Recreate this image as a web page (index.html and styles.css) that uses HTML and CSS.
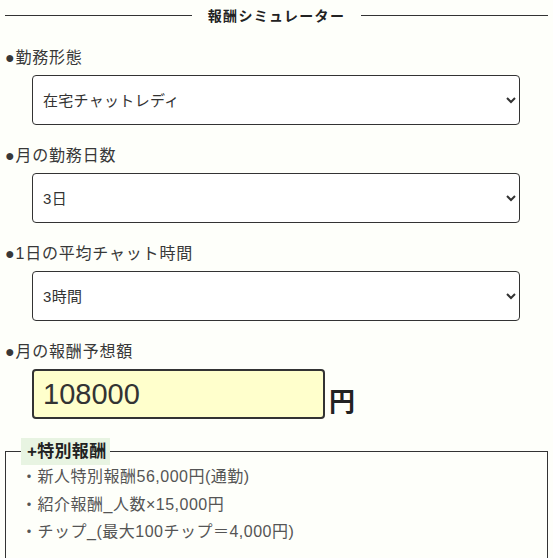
FILE: index.html
```html
<!DOCTYPE html>
<html lang="ja">
<head>
    <meta charset="UTF-8">
    <meta name="viewport" content="width=device-width, initial-scale=1.0">
    <title>報酬シミュレーター</title>
    <link rel="stylesheet" href="styles.css">
</head>
<body>
    <div class="simulator">
        <div class="sim-title">
            <span class="sim-line"></span>
            <h2>報酬シミュレーター</h2>
            <span class="sim-line"></span>
        </div>

        <div class="sim-field">
            <label for="workType">●勤務形態</label>
            <select id="workType">
                <option>在宅チャットレディ</option>
                <option>通勤チャットレディ</option>
            </select>
        </div>

        <div class="sim-field">
            <label for="days">●月の勤務日数</label>
            <select id="days">
                <option>3日</option>
            </select>
        </div>

        <div class="sim-field">
            <label for="hours">●1日の平均チャット時間</label>
            <select id="hours">
                <option>3時間</option>
            </select>
        </div>

        <div class="sim-field">
            <label for="result">●月の報酬予想額</label>
            <div class="result-row">
                <input type="text" id="result" value="108000" readonly>
                <span class="yen">円</span>
            </div>
        </div>

        <fieldset class="bonus">
            <legend>+特別報酬</legend>
            <ul>
                <li>・新人特別報酬56,000円(通勤)</li>
                <li>・紹介報酬_人数×15,000円</li>
                <li>・チップ_(最大100チップ＝4,000円)</li>
            </ul>
        </fieldset>
    </div>
</body>
</html>
```

FILE: styles.css
```css
body {
    margin: 0;
    background-color: #fefffa;
    font-family: "Liberation Sans", "Noto Sans CJK JP", sans-serif;
    color: #333;
}
.simulator {
    padding: 0 5px;
}
.sim-title {
    display: flex;
    align-items: center;
    height: 30px;
    margin-bottom: 16px;
}
.sim-title h2 {
    margin: 0 16px;
    font-size: 14px;
    font-weight: bold;
    letter-spacing: 1.3px;
    color: #222;
}
.sim-line {
    flex: 1;
    height: 1px;
    background: #333;
}
.sim-field {
    margin-bottom: 19px;
}
.sim-field label {
    display: block;
    font-size: 16px;
    line-height: 24px;
    letter-spacing: 0.8px;
    color: #383838;
}
.sim-field select {
    display: block;
    width: 488px;
    height: 50px;
    margin: 5px 0 0 27px;
    padding: 0 6px;
    border: 1px solid #333;
    border-radius: 4px;
    background-color: #fff;
    font-family: "Liberation Sans", "Noto Sans CJK JP", sans-serif;
    font-size: 15px;
    letter-spacing: 0.3px;
    color: #333;
}
.result-row {
    display: flex;
    align-items: flex-end;
    margin: 5px 0 0 27px;
}
.result-row input {
    width: 293px;
    height: 50px;
    box-sizing: border-box;
    padding: 0 9px;
    border: 2px solid #333;
    border-radius: 4px;
    background-color: #ffffcc;
    font-family: "Liberation Sans", "Noto Sans CJK JP", sans-serif;
    font-size: 29px;
    color: #333;
}
.yen {
    margin-left: 4px;
    font-size: 26px;
    font-weight: bold;
    line-height: 34px;
    color: #222;
}
.bonus {
    margin: 12px 0 0 0;
    padding: 0 15px 20px 15px;
    border: 1px solid #333;
    border-bottom: none;
    min-height: 100px;
}
.bonus legend {
    margin-left: 0;
    padding: 0 4px 0 6px;
    background-color: #e8f4e2;
    font-size: 17px;
    font-weight: bold;
    line-height: 27px;
    letter-spacing: 0.3px;
    color: #222;
}
.bonus ul {
    list-style: none;
    margin: -2px 0 0 0;
    padding: 0;
}
.bonus li {
    font-size: 16px;
    line-height: 27.5px;
    letter-spacing: 0.5px;
    color: #555;
}
```
